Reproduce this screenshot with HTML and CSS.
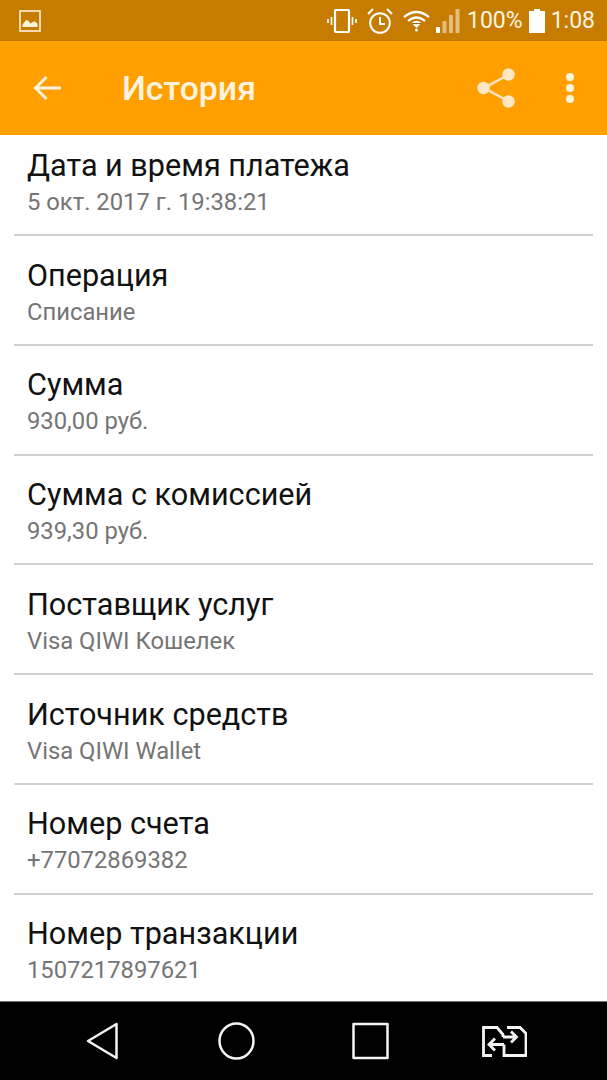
FILE: index.html
```html
<!DOCTYPE html>
<html>
    <head>
        <title>История</title>
        <link rel="stylesheet" href="styles.css">
    </head>
    <body>
        <div class="screen">
            <div class="status-bar">
                <svg class="status-image" width="22" height="22" viewBox="0 0 22 22">
                    <rect x="1" y="1" width="20" height="20" fill="none" stroke="#fff2d8" stroke-width="1.600"/>
                    <path d="M3.500 17v-2.500q3-4 4-4.500q2 0 4 3.500q3-2.500 4-2q1 .5 3 2v3.500z" fill="#fff2d8"/>
                </svg>
                <div class="status-right">
                    <svg class="status-vibrate" width="30" height="24" viewBox="0 0 30 24">
                        <rect x="8" y="1" width="14" height="22" rx="1" fill="none" stroke="#fff" stroke-width="2.200"/>
                        <path d="M4.500 8v8M1 10v4M25.500 8v8M29 10v4" stroke="#fff" stroke-width="1.600" fill="none"/>
                    </svg>
                    <svg class="status-alarm" width="26" height="26" viewBox="0 0 26 26">
                        <circle cx="13" cy="15" r="9.800" fill="none" stroke="#fff" stroke-width="2"/>
                        <path d="M13 9v7h5M1 6l5-5M25 6l-5-5" stroke="#fff" stroke-width="2" fill="none"/>
                    </svg>
                    <svg class="status-wifi" width="27" height="22" viewBox="0 0 27 22">
                        <path d="M1 7q12.500-10 25 0M5 11q8.500-7 17 0" stroke="#fff" stroke-width="2.200" fill="none"/>
                        <path d="M8.500 13q5-4.500 10 0l-5 5z" fill="#fff"/>
                        <path d="M9 13.500h9" stroke="#8a6a30" stroke-width="1.200" fill="none"/>
                        <circle cx="13.500" cy="20" r="1.500" fill="#fff"/>
                    </svg>
                    <svg class="status-signal" width="24" height="24" viewBox="0 0 24 24">
                        <rect x="0" y="18" width="4" height="6" fill="#fff"/>
                        <rect x="6.500" y="12" width="4" height="12" fill="#e6bd80"/>
                        <rect x="13" y="6" width="4" height="18" fill="#e6bd80"/>
                        <rect x="19.500" y="0" width="4" height="24" fill="#e6bd80"/>
                    </svg>
                    <span class="status-text status-level">100%</span>
                    <svg class="status-battery" width="16" height="24" viewBox="0 0 16 24">
                        <path d="M5 0h6v2h5v22H0V2h5z" fill="#fff"/>
                    </svg>
                    <span class="status-text status-time">1:08</span>
                </div>
            </div>
            <div class="toolbar">
                <svg class="toolbar-back" width="30" height="30" viewBox="0 0 30 30">
                    <path d="M29 15H3M14.500 4 3.500 15l11 11" stroke="#fff3e0" stroke-width="3" fill="none"/>
                </svg>
                <h1>История</h1>
                <svg class="toolbar-share" width="38" height="40" viewBox="0 0 38 40">
                    <path d="M31 7 7 20l24 13" stroke="#fde7c4" stroke-width="2.500" fill="none"/>
                    <circle cx="31.500" cy="6.500" r="6.200" fill="#fde7c4"/>
                    <circle cx="6.500" cy="20" r="6.200" fill="#fde7c4"/>
                    <circle cx="31.500" cy="33.500" r="6.200" fill="#fde7c4"/>
                </svg>
                <div class="toolbar-more"><i></i><i></i><i></i></div>
            </div>
            <div class="rows">
                <div class="row first">
                    <div class="label">Дата и время платежа</div>
                    <div class="value">5 окт. 2017 г. 19:38:21</div>
                </div>
                <div class="row">
                    <div class="label">Операция</div>
                    <div class="value">Списание</div>
                </div>
                <div class="row">
                    <div class="label">Сумма</div>
                    <div class="value">930,00 руб.</div>
                </div>
                <div class="row">
                    <div class="label">Сумма с комиссией</div>
                    <div class="value">939,30 руб.</div>
                </div>
                <div class="row">
                    <div class="label">Поставщик услуг</div>
                    <div class="value">Visa QIWI Кошелек</div>
                </div>
                <div class="row">
                    <div class="label">Источник средств</div>
                    <div class="value">Visa QIWI Wallet</div>
                </div>
                <div class="row">
                    <div class="label">Номер счета</div>
                    <div class="value">+77072869382</div>
                </div>
                <div class="row last">
                    <div class="label">Номер транзакции</div>
                    <div class="value">1507217897621</div>
                </div>
            </div>
            <div class="nav-bar">
                <svg class="nav-back" width="32" height="38" viewBox="0 0 32 38">
                    <path d="M30.500 2v34L2 19z" fill="none" stroke="#f4f4f4" stroke-width="2.500" stroke-linejoin="round"/>
                </svg>
                <svg class="nav-home" width="37" height="38" viewBox="0 0 37 38">
                    <ellipse cx="18.500" cy="19" rx="17" ry="17.500" fill="none" stroke="#f4f4f4" stroke-width="2.500"/>
                </svg>
                <svg class="nav-recent" width="37" height="38" viewBox="0 0 37 38">
                    <rect x="1.500" y="2" width="34" height="34" fill="none" stroke="#f4f4f4" stroke-width="2.500" stroke-linejoin="round"/>
                </svg>
                <svg class="nav-switch" width="45" height="32" viewBox="0 0 45 32">
                    <path d="M10 30.500H1.500V2.500H15L21 9.500V12M25 2.500H38L44 8.500V30.500H22V19.500" fill="none" stroke="#f4f4f4" stroke-width="2.800"/>
                    <path d="M21 12H34M29 6.500 34.500 12 29 17.500M22 19.500H7M13 13.500 7 19.500l6 6" fill="none" stroke="#f4f4f4" stroke-width="2.800"/>
                </svg>
            </div>
        </div>
    </body>
</html>
```
FILE: styles.css
```css
body, html {
    height: 100%;
}
body {
    margin: 0;
    padding: 0;
    font-family: Roboto, "Liberation Sans", sans-serif;
    overflow: hidden;
}

.screen {
    width: 607px;
    height: 1080px;
    display: flex;
    flex-direction: column;
    background-color: #fff;
}

.status-bar {
    height: 41px;
    flex-shrink: 0;
    display: flex;
    align-items: center;
    justify-content: space-between;
    padding: 0 12px 0 19px;
    background-color: #c67c00;
}
.status-right {
    display: flex;
    align-items: center;
}
.status-alarm {
    margin-left: 10px;
}
.status-wifi {
    margin-left: 10px;
}
.status-signal {
    margin-left: 6px;
}
.status-text {
    color: #fff3e0;
    font-size: 23px;
    line-height: 28px;
}
.status-level {
    margin-left: 7px;
}
.status-battery {
    margin-left: 6px;
}
.status-time {
    margin-left: 6px;
}

.toolbar {
    height: 94px;
    flex-shrink: 0;
    display: flex;
    align-items: center;
    background-color: #ffa000;
    padding-left: 32px;
}
.toolbar h1 {
    margin: 0 0 0 60px;
    flex: 1;
    color: #fff3e0;
    font-size: 33.800px;
    font-weight: 500;
}
.toolbar-share {
    margin-right: 35px;
}
.toolbar-more {
    width: 40px;
    margin-right: 17px;
    display: flex;
    flex-direction: column;
    align-items: center;
    gap: 3px;
}
.toolbar-more i {
    width: 8px;
    height: 8px;
    border-radius: 50%;
    background-color: #fff3e0;
}

.rows {
    flex: 1;
    overflow: hidden;
}
.row {
    height: 109.800px;
    box-sizing: border-box;
    margin: 0 14px;
    padding: 19.500px 13px 0;
    border-bottom: 2px solid #cfcfcf;
}
.row.first {
    height: 101px;
    padding-top: 11px;
}
.row.last {
    border-bottom: none;
}
.label {
    color: #111;
    font-size: 30.600px;
    line-height: 40px;
}
.value {
    color: #757575;
    font-size: 23.800px;
    line-height: 32px;
}

.nav-bar {
    height: 78px;
    flex-shrink: 0;
    display: flex;
    align-items: center;
    background-color: #000;
    border-top: 1px solid #777;
    padding-left: 86px;
}
.nav-home {
    margin-left: 100px;
}
.nav-recent {
    margin-left: 97px;
}
.nav-switch {
    margin-left: 93px;
}
```
